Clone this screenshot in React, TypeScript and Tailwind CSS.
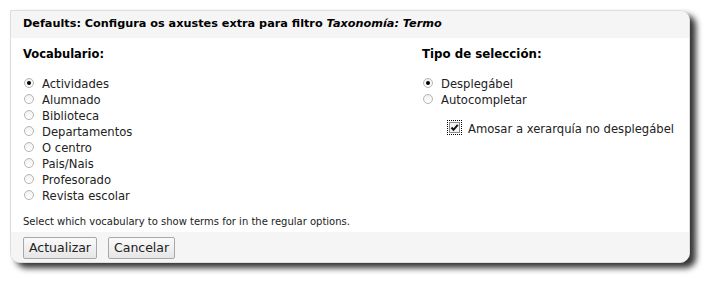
import React from "react";

const vocabularies = [
  "Actividades",
  "Alumnado",
  "Biblioteca",
  "Departamentos",
  "O centro",
  "Pais/Nais",
  "Profesorado",
  "Revista escolar",
];

const selectionTypes = ["Desplegábel", "Autocompletar"];

const Radio = ({ checked }: { checked?: boolean }) => (
  <span className="relative mt-[-3px] flex h-[10px] w-[10px] shrink-0 items-center justify-center rounded-full border border-[#b4b4b4] bg-gradient-to-b from-[#f0f0f0] to-white">
    {checked && <span className="h-[4px] w-[4px] rounded-full bg-black" />}
  </span>
);

const RadioRow = ({ label, checked }: { label: string; checked?: boolean }) => (
  <div className="flex h-[16px] items-center gap-[8px]">
    <Radio checked={checked} />
    <span>{label}</span>
  </div>
);

const Button = ({ children }: { children: React.ReactNode }) => (
  <button className="h-[22px] rounded-[2px] border border-[#a8a8a8] bg-gradient-to-b from-[#fafafa] to-[#e6e6e6] px-[5px] text-[12.5px] leading-[20px] text-[#222]">
    {children}
  </button>
);

const App = () => {
  return (
    <div className="h-[286px] w-[714px] bg-white p-[10px] font-['DejaVu_Sans',Verdana,sans-serif]">
      <div className="flex h-[253px] w-[680px] flex-col overflow-hidden rounded-tr-[10px] rounded-b-[10px] border border-[#dedede] bg-white text-[11.6px] text-[#222] shadow-[6px_5px_6px_rgba(0,0,0,0.8)]">
        <div className="flex h-[27px] shrink-0 items-center bg-[#f5f5f5] px-[12px] text-[11.25px] font-bold text-black">
          Defaults: Configura os axustes extra para filtro&nbsp;
          <em>Taxonomía: Termo</em>
        </div>

        <div className="flex flex-1 px-[12px] pt-[8px]">
          <div className="w-[399px]">
            <div className="h-[16px] text-[11.5px] font-bold leading-[16px] text-black">Vocabulario:</div>
            <div className="mt-[14px] leading-[16px]">
              {vocabularies.map((v, i) => (
                <div key={v} className="pl-[1px]">
                  <RadioRow label={v} checked={i === 0} />
                </div>
              ))}
            </div>
            <p className="mt-[12px] text-[10px] leading-[12px]">
              Select which vocabulary to show terms for in the regular options.
            </p>
          </div>

          <div className="flex-1">
            <div className="h-[16px] text-[11.8px] font-bold leading-[16px] text-black">Tipo de selección:</div>
            <div className="mt-[14px] pl-[1px] leading-[16px]">
              {selectionTypes.map((t, i) => (
                <RadioRow key={t} label={t} checked={i === 0} />
              ))}
            </div>
            <div className="mt-[13px] flex h-[16px] items-center gap-[6px] pl-[25px] leading-[16px]">
              <span className="mt-[-3px] flex h-[15px] w-[15px] items-center justify-center border border-dotted border-black">
                <span className="flex h-[11px] w-[11px] items-center justify-center border border-[#8a8a8a] bg-[#f4f4f4]">
                  <svg viewBox="0 0 9 9" className="h-[9px] w-[9px]">
                    <path d="M1.5 4.5 L3.5 6.8 L7.8 1.8" fill="none" stroke="#111" strokeWidth="2" />
                  </svg>
                </span>
              </span>
              <span>Amosar a xerarquía no desplegábel</span>
            </div>
          </div>
        </div>

        <div className="flex h-[30px] shrink-0 items-start gap-[11px] bg-[#f5f5f5] px-[12px] pt-[5px]">
          <Button>Actualizar</Button>
          <Button>Cancelar</Button>
        </div>
      </div>
    </div>
  );
};

export default App;
